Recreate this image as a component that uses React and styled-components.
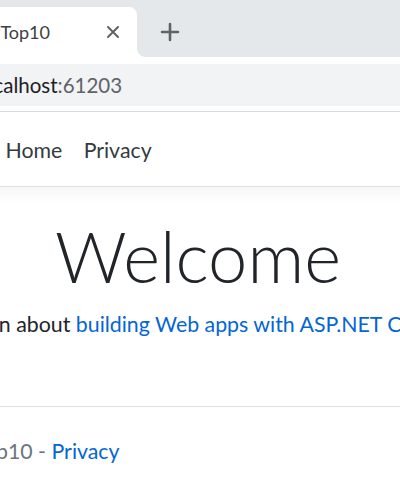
import React from 'react'
import styled, { createGlobalStyle } from 'styled-components'

const GlobalStyle = createGlobalStyle`
  html, body {
    margin: 0;
    padding: 0;
    overflow: hidden;
    background: #ffffff;
  }
  * {
    box-sizing: border-box;
  }
`

const UI_FONT = `"Lato", "Open Sans", "Noto Sans", sans-serif`

// the screenshot is a crop of a wider browser window, so the window is
// wider than the viewport and starts left of it
const BrowserWindow = styled.div`
  width: 636px;
  margin-left: -120px;
  height: 100vh;
  display: flex;
  flex-direction: column;
  font-family: ${UI_FONT};
`

const TabStrip = styled.div`
  height: 57px;
  background: #e5e8eb;
  display: flex;
  align-items: flex-end;
  padding-left: 8px;
`

const Tab = styled.div`
  position: relative;
  width: 249px;
  height: 50px;
  background: #ffffff;
  border-radius: 8px 8px 0 0;
  display: flex;
  align-items: center;
  padding: 0 12px 0 16px;

  &::after {
    content: '';
    position: absolute;
    right: -8px;
    bottom: 0;
    width: 8px;
    height: 8px;
    background: radial-gradient(circle at 100% 0, transparent 7.5px, #ffffff 8px);
  }
`

const Favicon = styled.div`
  width: 21px;
  height: 21px;
  flex-shrink: 0;
  margin-right: 8px;
  border-radius: 4px;
  background: #5c2d91;
`

const TabTitle = styled.div`
  width: 117px;
  overflow: hidden;
  display: flex;
  justify-content: flex-end;
  white-space: nowrap;
  font-size: 18px;
  color: #3c4043;
`

const IconButton = styled.div`
  width: ${p => p.size}px;
  height: ${p => p.size}px;
  display: flex;
  align-items: center;
  justify-content: center;
  margin-left: ${p => p.push ? 'auto' : '0'};
  flex-shrink: 0;
`

const NewTab = styled(IconButton)`
  align-self: center;
  margin-top: 7px;
  margin-left: 19px;
`

const Toolbar = styled.div`
  height: 55px;
  background: #ffffff;
  border-bottom: 1px solid #dadce0;
  padding: 7px 0 0 50px;
`

const Omnibox = styled.div`
  height: 42px;
  border-radius: 21px;
  background: #f1f3f4;
  display: flex;
  align-items: center;
  padding-left: 47px;
  font-size: 20.5px;
  white-space: nowrap;
`

const Host = styled.span`
  color: #202124;
`

const Port = styled.span`
  color: #5f6368;
`

const Page = styled.div`
  flex: 1;
  display: flex;
  flex-direction: column;
  background: #ffffff;
  color: #212529;
  font-size: 21.33px;
  line-height: 1.5;
`

const Navbar = styled.nav`
  padding: 10px 0;
  border-bottom: 1px solid #dee2e6;
  box-shadow: 0 5px 16px rgba(0, 0, 0, 0.05);
`

const Container = styled.div`
  padding-left: ${p => p.inset}px;
  display: flex;
  align-items: center;
  white-space: nowrap;
`

const Brand = styled.a`
  font-size: 26.67px;
  line-height: 32px;
  color: #343a40;
  margin-right: 21.33px;
`

const NavLink = styled.a`
  display: block;
  padding: 12px 10.67px 10px;
  line-height: 32px;
  color: #343a40;
  text-decoration: none;
`

const Main = styled.main`
  flex: 1;
  display: flex;
  flex-direction: column;
  align-items: center;
  padding-top: 27px;
`

const Title = styled.h1`
  margin: 0 0 10px;
  font-size: 70.5px;
  font-weight: 300;
  line-height: 1.2;
  white-space: nowrap;
`

const Lead = styled.p`
  margin: 0;
  white-space: nowrap;
`

const Link = styled.a`
  color: #0366d6;
  text-decoration: none;
`

const Footer = styled.footer`
  border-top: 1px solid #dee2e6;
  height: 90px;
  display: flex;
  align-items: center;
  color: #6c757d;
`

function CloseIcon() {
  return (
    <svg width="14" height="14" viewBox="0 0 14 14">
      <path d="M2 2 L12 12 M12 2 L2 12" stroke="#5f6368" strokeWidth="2" strokeLinecap="round" />
    </svg>
  )
}

function PlusIcon() {
  return (
    <svg width="20" height="20" viewBox="0 0 20 20">
      <path d="M10 2 V18 M2 10 H18" stroke="#5f6368" strokeWidth="2.6" strokeLinecap="round" />
    </svg>
  )
}

export default function App() {
  return (
    <>
      <GlobalStyle />
      <BrowserWindow>
        <TabStrip>
          <Tab>
            <Favicon />
            <TabTitle>Home Page - ASPTop10</TabTitle>
            <IconButton size={24} push>
              <CloseIcon />
            </IconButton>
          </Tab>
          <NewTab size={28}>
            <PlusIcon />
          </NewTab>
        </TabStrip>
        <Toolbar>
          <Omnibox>
            <Host>localhost</Host>
            <Port>:61203</Port>
          </Omnibox>
        </Toolbar>
        <Page>
          <Navbar>
            <Container inset={20}>
              <Brand>Top10</Brand>
              <NavLink>Home</NavLink>
              <NavLink>Privacy</NavLink>
            </Container>
          </Navbar>
          <Main>
            <Title>Welcome</Title>
            <Lead>
              Learn about <Link>building Web apps with ASP.NET Core</Link>.
            </Lead>
          </Main>
          <Footer>
            <Container inset={3}>
              <span>&copy; 2021 - Top10 -&nbsp;</span>
              <Link>Privacy</Link>
            </Container>
          </Footer>
        </Page>
      </BrowserWindow>
    </>
  )
}
